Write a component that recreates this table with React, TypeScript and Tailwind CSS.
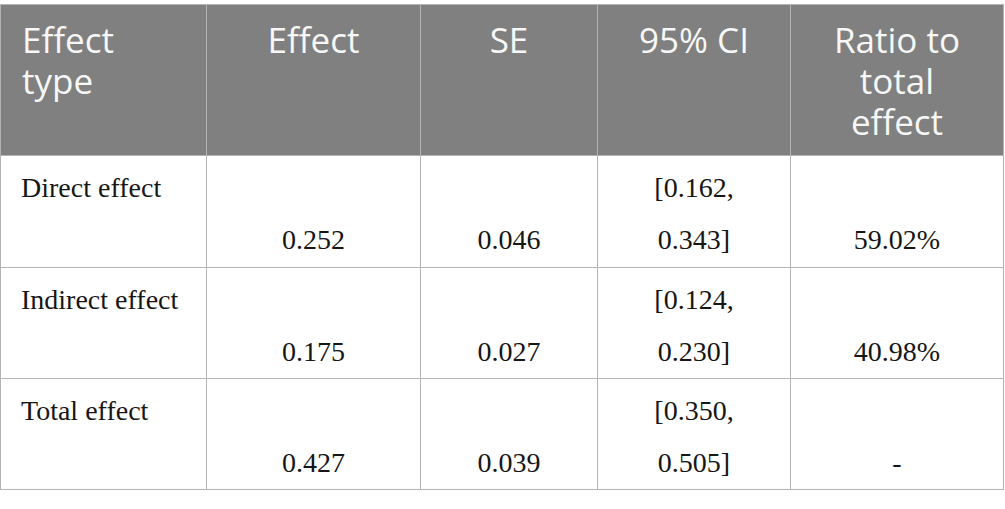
export default function App() {
  const head = ["Effect", "SE", "95% CI"]
  const rows = [
    { label: "Direct effect", effect: "0.252", se: "0.046", lo: "[0.162,", hi: "0.343]", ratio: "59.02%", h: "h-[112px]" },
    { label: "Indirect effect", effect: "0.175", se: "0.027", lo: "[0.124,", hi: "0.230]", ratio: "40.98%", h: "h-[111px]" },
    { label: "Total effect", effect: "0.427", se: "0.039", lo: "[0.350,", hi: "0.505]", ratio: "-", h: "h-[111px]" },
  ]

  const headCell =
    "h-[151px] bg-[#7f807f] border-r border-b border-[#b4b4b4] pt-[14px] text-[35px] leading-[41px] text-[#f7f7f7]"

  return (
    <div className="w-[1005px] h-[509px] bg-white pt-[4px]">
      <div className="grid w-[1004px] grid-cols-[206px_214px_177px_193px_213px] border-t border-l border-[#b4b4b4]">
        {/* header */}
        <div className={`${headCell} pl-[21px]`} style={{ fontFamily: '"Open Sans", sans-serif' }}>
          Effect
          <br />
          type
        </div>
        {head.map((h) => (
          <div key={h} className={`${headCell} text-center`} style={{ fontFamily: '"Open Sans", sans-serif' }}>
            {h}
          </div>
        ))}
        <div className={`${headCell} text-center`} style={{ fontFamily: '"Open Sans", sans-serif' }}>
          Ratio to
          <br />
          total
          <br />
          effect
        </div>

        {/* body */}
        {rows.map((r) => (
          <div key={r.label} className="contents font-['Liberation_Serif',serif] text-[28px] leading-[52px] text-[#161616]">
            <div className={`${r.h} border-r border-b border-[#b4b4b4] pl-[20px] pt-[6px]`}>{r.label}</div>
            <div className={`${r.h} border-r border-b border-[#b4b4b4] pt-[58px] text-center`}>{r.effect}</div>
            <div className={`${r.h} border-r border-b border-[#b4b4b4] pt-[58px] text-center`}>{r.se}</div>
            <div className={`${r.h} border-r border-b border-[#b4b4b4] pt-[6px] text-center`}>
              {r.lo}
              <br />
              {r.hi}
            </div>
            <div className={`${r.h} border-r border-b border-[#b4b4b4] pt-[58px] text-center`}>{r.ratio}</div>
          </div>
        ))}
      </div>
    </div>
  )
}
